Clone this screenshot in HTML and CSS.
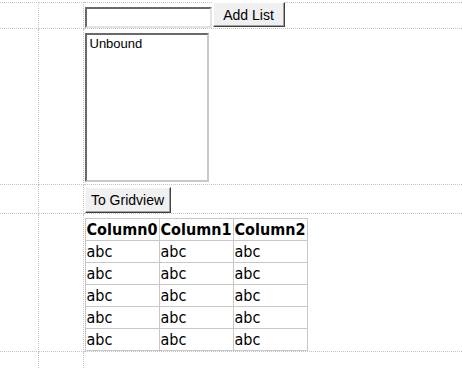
FILE: index.html
```html
<!DOCTYPE html>
<html lang="en">
<head>
	<meta charset="UTF-8">
	<title>Default.aspx</title>
	<link rel="stylesheet" href="styles.css">
</head>
<body>
	<table class="layout">
		<tr class="row-top">
			<td class="c1"></td><td class="c2"></td>
			<td class="c3">
				<div class="line">
					<input type="text" class="txt">
					<button class="btn btn-add">Add List</button>
				</div>
			</td>
		</tr>
		<tr class="row-list">
			<td class="c1"></td><td class="c2"></td>
			<td class="c3">
				<div class="listbox">Unbound</div>
			</td>
		</tr>
		<tr class="row-btn">
			<td class="c1"></td><td class="c2"></td>
			<td class="c3">
				<button class="btn btn-grid">To Gridview</button>
			</td>
		</tr>
		<tr class="row-grid">
			<td class="c1"></td><td class="c2"></td>
			<td class="c3">
				<table class="grid">
					<tr><th>Column0</th><th>Column1</th><th>Column2</th></tr>
					<tr><td>abc</td><td>abc</td><td>abc</td></tr>
					<tr><td>abc</td><td>abc</td><td>abc</td></tr>
					<tr><td>abc</td><td>abc</td><td>abc</td></tr>
					<tr><td>abc</td><td>abc</td><td>abc</td></tr>
					<tr><td>abc</td><td>abc</td><td>abc</td></tr>
				</table>
			</td>
		</tr>
		<tr class="row-end">
			<td class="c1"></td><td class="c2"></td><td class="c3"></td>
		</tr>
	</table>
</body>
</html>
```

FILE: styles.css
```css
*{
	margin:0;
	padding:0;
	box-sizing:border-box;
}
html,body{
	width:100%;
	height:100%;
	background:#fff;
	overflow:hidden;
}
body{
	font-family:"Liberation Sans",Arial,sans-serif;
	font-size:13px;
	color:#000;
	padding-top:2px;
}
.layout{
	width:100%;
	border-collapse:collapse;
}
.layout > tbody > tr > td{
	border:1px dotted #c4c4c4;
	padding:0;
	vertical-align:top;
}
.layout .c1{
	width:38px;
	border-left:none;
}
.layout .c2{
	width:45px;
}
.layout .c3{
	border-right:none;
}
.row-top{height:26px;}
.row-list{height:156px;}
.row-btn{height:29px;}
.row-grid{height:138px;}
.row-end{height:20px;}
.layout .row-end td{
	border-bottom:none;
}
.line{
	display:flex;
	align-items:flex-end;
	height:25px;
	margin-left:1px;
}
.txt{
	width:127px;
	height:21px;
	border:2px solid;
	border-top-color:#696969;
	border-left-color:#696969;
	border-right-color:#e3e3e3;
	border-bottom-color:#e3e3e3;
	background:#fff;
	outline:none;
}
.btn{
	font-family:"Liberation Sans",Arial,sans-serif;
	font-size:14px;
	color:#000;
	background:#f0f0f0;
	border:1px solid;
	border-top-color:#fff;
	border-left-color:#fff;
	border-right-color:#404040;
	border-bottom-color:#404040;
	box-shadow:inset -1px -1px 0 #a0a0a0;
	padding:0;
	white-space:nowrap;
	text-align:center;
}
.btn-add{
	width:72px;
	height:25px;
	margin-left:1px;
	margin-bottom:1px;
}
.listbox{
	width:124px;
	height:149px;
	margin:4px 0 0 1px;
	border:2px solid;
	border-top-color:#696969;
	border-left-color:#696969;
	border-right-color:#c8c8c8;
	border-bottom-color:#c8c8c8;
	padding:1px 3px;
	font-size:13px;
}
.btn-grid{
	width:86px;
	height:26px;
	margin:2px 0 0 1px;
}
.grid{
	border-collapse:collapse;
	table-layout:fixed;
	width:223px;
	margin:4px 0 0 1px;
	border:1px solid #a9a9a9;
	font-family:"DejaVu Sans Condensed","DejaVu Sans",Tahoma,sans-serif;
	font-size:16px;
}
.grid tr{
	height:22px;
}
.grid th,.grid td{
	border:1px solid #c8c8c8;
	width:74px;
	text-align:left;
	padding:0 1px;
	white-space:nowrap;
	overflow:hidden;
	vertical-align:middle;
}
.grid th{
	font-weight:bold;
}
```
